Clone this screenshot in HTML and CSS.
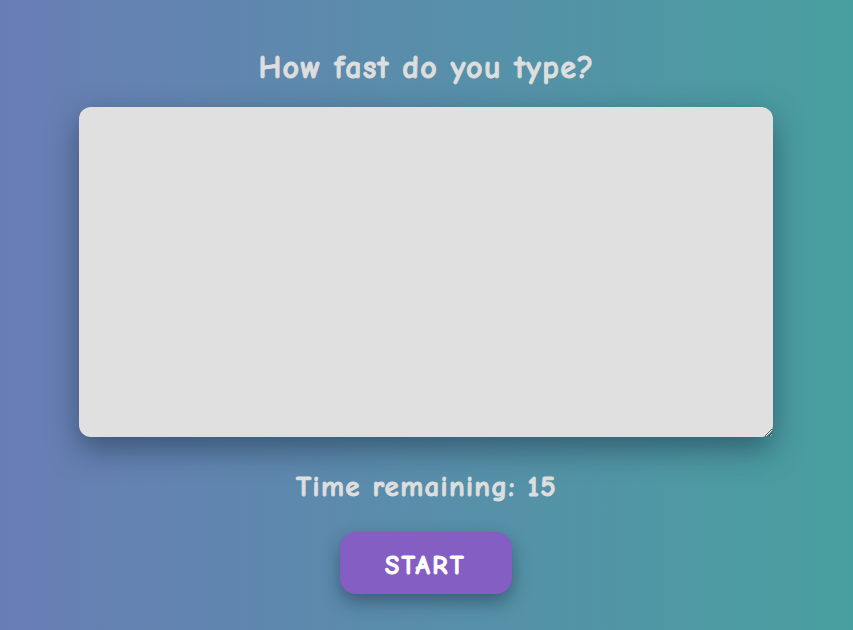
FILE: index.html
```html
<!DOCTYPE html>
<html>
<head>
<meta charset="utf-8">
<link rel="stylesheet" href="styles.css">
</head>
<body>
<main class="app">
  <h1 class="title">How fast do you type?</h1>
  <textarea class="input"></textarea>
  <p class="timer">Time remaining: 15</p>
  <button class="start">START</button>
</main>
</body>
</html>
```
FILE: styles.css
```css
html, body {
  margin: 0;
  height: 100%;
}
body {
  background: linear-gradient(to right, #697db5, #489f9f);
  font-family: "Comic Sans MS", "Comic Neue", "Chalkboard SE", cursive;
  color: #dedede;
}
.app {
  display: flex;
  flex-direction: column;
  align-items: center;
  padding-top: 49px;
}
.title {
  margin: 0;
  font-size: 32px;
  line-height: 38px;
  letter-spacing: 1.3px;
  font-weight: bold;
  -webkit-text-stroke: 0.9px #dedede;
  color: #dedede;
}
.input {
  box-sizing: border-box;
  width: 694px;
  height: 330px;
  margin: 20px 2px 0 0;
  border: none;
  border-radius: 12px;
  background: #e0e0e0;
  box-shadow: 0 12px 30px rgba(20, 40, 60, 0.5);
  outline: none;
  font-family: inherit;
  font-size: 18px;
  padding: 12px;
}
.timer {
  margin: 32px 0 0;
  font-size: 29px;
  line-height: 36px;
  letter-spacing: 1.3px;
  font-weight: bold;
  -webkit-text-stroke: 0.9px #dedede;
}
.start {
  margin: 27px 2px 0 0;
  width: 172px;
  height: 62px;
  padding: 5px 0 0;
  border: none;
  border-radius: 16px;
  background: #845ec2;
  color: #fff;
  font-family: inherit;
  font-size: 26px;
  letter-spacing: 2.5px;
  font-weight: bold;
  -webkit-text-stroke: 0.9px #fff;
  box-shadow: 0 8px 18px rgba(20, 40, 60, 0.45);
  cursor: pointer;
}
```
